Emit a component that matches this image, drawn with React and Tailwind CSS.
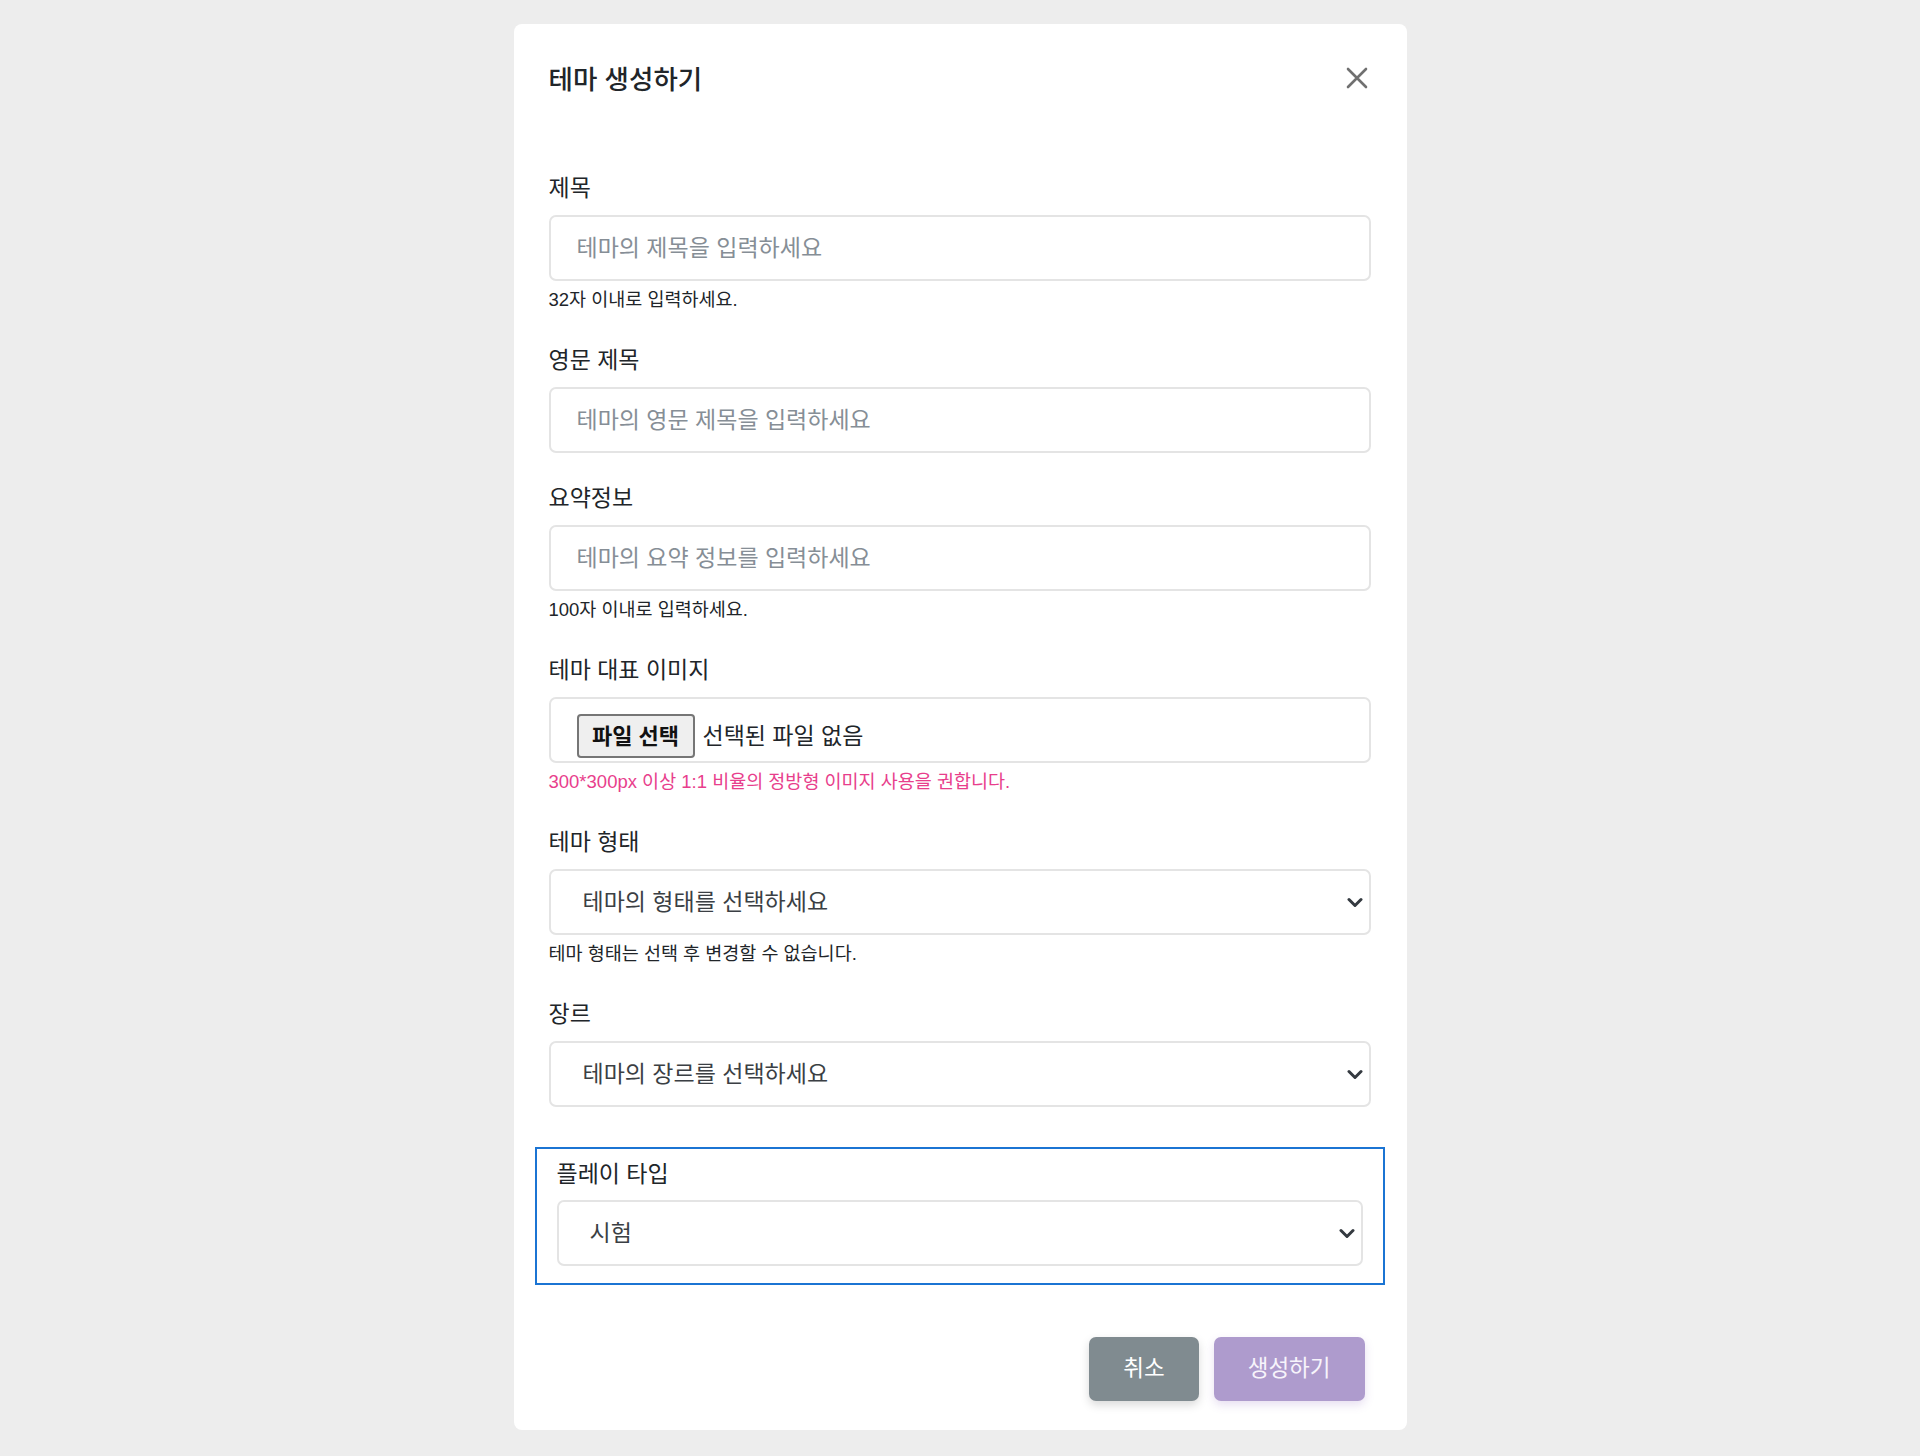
import React from "react";

const FONT = { fontFamily: '"Liberation Sans", "Noto Sans CJK KR", sans-serif' };

function Chevron() {
  return (
    <svg width="16" height="11" viewBox="0 0 16 11" className="pointer-events-none">
      <path d="M2 2.5l6 6 6-6" fill="none" stroke="#343a40" strokeWidth="3" strokeLinecap="round" strokeLinejoin="round" />
    </svg>
  );
}

function Label({ children }) {
  return <div className="text-[23px] leading-[30px] text-[#212529] mb-[12px]">{children}</div>;
}

function Helper({ children, pink }) {
  return (
    <div className={`text-[18.5px] leading-[28px] mt-[5px] ${pink ? "text-[#e83e8c]" : "text-[#212529]"}`}>
      {children}
    </div>
  );
}

function TextInput({ placeholder }) {
  return (
    <div className="h-[66px] border-2 border-[#e4e4e4] rounded-[7px] flex items-center pl-[26px] text-[23px] text-[#868e96]">
      {placeholder}
    </div>
  );
}

function SelectBox({ value, padLeft = "pl-[32px]", color = "text-[#3b3f44]" }) {
  return (
    <div className={`h-[66px] border-2 border-[#e4e4e4] rounded-[7px] flex items-center justify-between ${padLeft} pr-[6px] text-[23px] ${color}`}>
      <span>{value}</span>
      <Chevron />
    </div>
  );
}

export default function App() {
  return (
    <div className="min-h-[1456px] bg-[#ededed] flex justify-center pt-[24px]" style={FONT}>
      <div className="w-[893px] h-[1406px] bg-white rounded-[8px] pl-[35px] pr-[36px] pt-[35px] pb-[28px] flex flex-col">
        <div className="flex items-center justify-between h-[36px]">
          <div className="text-[26.5px] leading-[36px] font-medium text-[#212529] mt-[5px]">테마 생성하기</div>
          <button className="w-[24px] h-[24px] flex items-center justify-center mr-[2px] mt-[2px]">
            <svg width="22" height="22" viewBox="0 0 22 22">
              <path d="M2 2L20 20M20 2L2 20" stroke="#707070" strokeWidth="2.6" strokeLinecap="round" />
            </svg>
          </button>
        </div>

        <div className="mt-[78px] flex flex-col">
          <div className="mb-[31px]">
            <Label>제목</Label>
            <TextInput placeholder="테마의 제목을 입력하세요" />
            <Helper>32자 이내로 입력하세요.</Helper>
          </div>

          <div className="mb-[30px]">
            <Label>영문 제목</Label>
            <TextInput placeholder="테마의 영문 제목을 입력하세요" />
          </div>

          <div className="mb-[31px]">
            <Label>요약정보</Label>
            <TextInput placeholder="테마의 요약 정보를 입력하세요" />
            <Helper>100자 이내로 입력하세요.</Helper>
          </div>

          <div className="mb-[31px]">
            <Label>테마 대표 이미지</Label>
            <div className="h-[66px] border-2 border-[#e4e4e4] rounded-[7px] flex items-end pl-[26px] pb-[3px]">
              <div className="flex items-center h-[44px]">
                <div className="h-[44px] w-[118px] bg-[#efefef] border-2 border-[#767676] rounded-[4px] flex items-center justify-center text-[22px] font-bold text-[#111]">
                  파일 선택
                </div>
                <span className="ml-[8px] text-[23px] text-[#212529]">선택된 파일 없음</span>
              </div>
            </div>
            <Helper pink>300*300px 이상 1:1 비율의 정방형 이미지 사용을 권합니다.</Helper>
          </div>

          <div className="mb-[31px]">
            <Label>테마 형태</Label>
            <SelectBox value="테마의 형태를 선택하세요" />
            <Helper>테마 형태는 선택 후 변경할 수 없습니다.</Helper>
          </div>

          <div className="mb-[40px]">
            <Label>장르</Label>
            <SelectBox value="테마의 장르를 선택하세요" />
          </div>

          <div className="mx-[-14px] border-2 border-[#1b74d3] px-[20px] pt-[10px] pb-[17px]">
            <div className="text-[23px] leading-[30px] text-[#212529] mb-[11px]">플레이 타입</div>
            <SelectBox value="시험" padLeft="pl-[31px]" />
          </div>
        </div>

        <div className="mt-[52px] flex justify-end gap-[15px] pr-[6px]">
          <button className="h-[64px] px-[34px] rounded-[7px] bg-[#808b90] text-white text-[22.5px] shadow-[0_4px_10px_rgba(0,0,0,0.15)]">
            취소
          </button>
          <button className="h-[64px] px-[34px] rounded-[7px] bg-[#ae9bcd] text-[#f7f4fb] text-[22.5px] shadow-[0_4px_10px_rgba(120,80,180,0.18)]">
            생성하기
          </button>
        </div>
      </div>
    </div>
  );
}
